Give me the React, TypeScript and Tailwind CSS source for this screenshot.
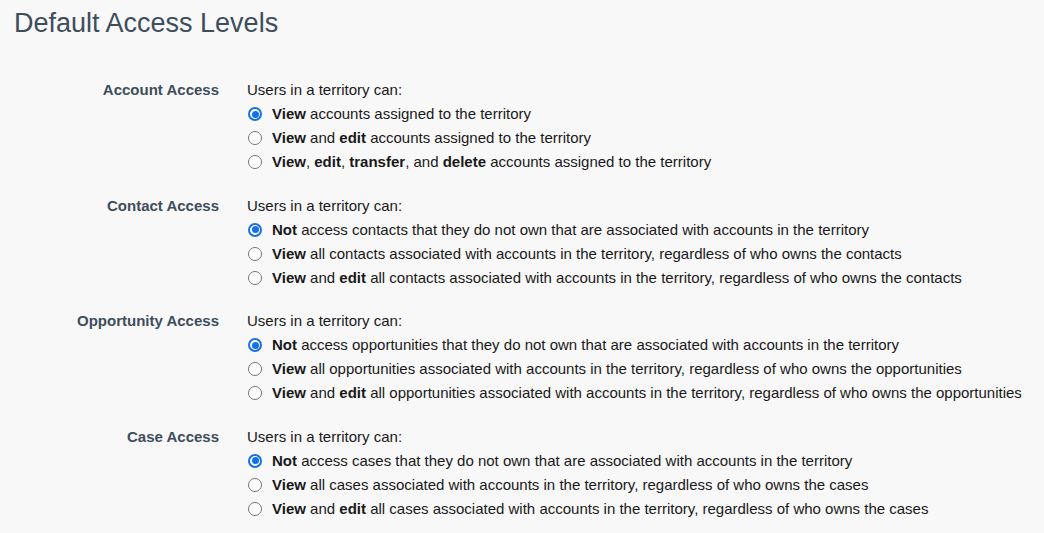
const sections = [
  {
    label: 'Account Access',
    options: [
      <><b>View</b> accounts assigned to the territory</>,
      <><b>View</b> and <b>edit</b> accounts assigned to the territory</>,
      <><b>View</b>, <b>edit</b>, <b>transfer</b>, and <b>delete</b> accounts assigned to the territory</>,
    ],
  },
  {
    label: 'Contact Access',
    options: [
      <><b>Not</b> access contacts that they do not own that are associated with accounts in the territory</>,
      <><b>View</b> all contacts associated with accounts in the territory, regardless of who owns the contacts</>,
      <><b>View</b> and <b>edit</b> all contacts associated with accounts in the territory, regardless of who owns the contacts</>,
    ],
  },
  {
    label: 'Opportunity Access',
    options: [
      <><b>Not</b> access opportunities that they do not own that are associated with accounts in the territory</>,
      <><b>View</b> all opportunities associated with accounts in the territory, regardless of who owns the opportunities</>,
      <><b>View</b> and <b>edit</b> all opportunities associated with accounts in the territory, regardless of who owns the opportunities</>,
    ],
  },
  {
    label: 'Case Access',
    options: [
      <><b>Not</b> access cases that they do not own that are associated with accounts in the territory</>,
      <><b>View</b> all cases associated with accounts in the territory, regardless of who owns the cases</>,
      <><b>View</b> and <b>edit</b> all cases associated with accounts in the territory, regardless of who owns the cases</>,
    ],
  },
];

function Radio({ checked }: { checked: boolean }) {
  if (checked) {
    return (
      <span className="w-[14px] h-[14px] rounded-full border-[2px] border-[#1570e6] bg-white flex items-center justify-center shrink-0">
        <span className="w-[7px] h-[7px] rounded-full bg-[#1570e6]" />
      </span>
    );
  }
  return <span className="block w-[14px] h-[14px] rounded-full border border-[#767676] bg-white shrink-0" />;
}

export default function App() {
  return (
    <div className="min-h-[533px] w-[1044px] bg-[#f8f8f8] font-['Liberation_Sans',Arial,sans-serif] text-[15px] text-[#181818]">
      <h1 className="pl-[14px] pt-[7px] text-[27px] leading-[32px] text-[#3e4d5c]">Default Access Levels</h1>

      <div className="mt-[39px] flex flex-col gap-[19.5px]">
        {sections.map((s) => (
          <div key={s.label} className="flex">
            <div className="w-[219px] text-right font-bold text-[#3e4d5c] leading-[24px]">{s.label}</div>
            <div className="ml-[28px] flex flex-col">
              <div className="leading-[24px]">Users in a territory can:</div>
              {s.options.map((o, i) => (
                <label key={i} className="flex items-center h-[24px] leading-[24px]">
                  <span className="ml-[1px] mr-[10px]">
                    <Radio checked={i === 0} />
                  </span>
                  <span>{o}</span>
                </label>
              ))}
            </div>
          </div>
        ))}
      </div>
    </div>
  );
}
